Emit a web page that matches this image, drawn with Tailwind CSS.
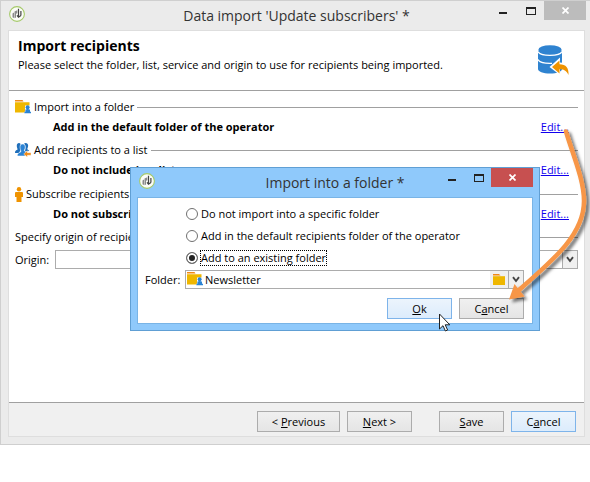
<!DOCTYPE html>
<html lang="en">
<head>
<meta charset="utf-8">
<meta name="viewport" content="width=device-width, initial-scale=1">
<title>Data import 'Update subscribers'</title>
<script src="https://cdn.jsdelivr.net/npm/@tailwindcss/browser@4"></script>
</head>
<body class="relative bg-white font-['Open_Sans',sans-serif] text-[11px] leading-4 text-black">
<svg class="hidden" aria-hidden="true">
  <symbol id="app" viewBox="0 0 16 16">
    <circle cx="8" cy="8" r="7.4" fill="#fbfcf8" stroke="#a5c96a" stroke-width="1.1"/>
    <path d="M3.500 7.500 5 6.500v5.500l-1.500-.8ZM5.500 5.500 8.300 4.200v3l-1.300.6v3.800l-1.500.6Z" fill="#8a8a8a"/>
    <path d="M9.500 2.800v8.400M11.900 5v4.500M8 9.300l1.500 1.900 2.400-1.700" fill="none" stroke="#444" stroke-width="1.200"/>
  </symbol>
  <symbol id="folder-user" viewBox="0 0 16 14">
    <path d="M0 0h7.500l1 1.400H0Z" fill="#f08a16"/>
    <path d="M0 2.300h14.500v3.200H10v5.700l-.8 1.300H0Z" fill="#efb700"/>
    <circle cx="12.600" cy="7.300" r="2" fill="#2b83d4"/>
    <path d="M11.500 8.500h2.200v1h1.300v2.200h1v1.600H9.400v-1.600h1V9.500h1.100Z" fill="#2b83d4"/>
  </symbol>
  <symbol id="group" viewBox="0 0 16 14">
    <path d="M1.800 3.200C1.600.7 3-.2 4.700.2l1 .8C4.500 2.500 5 5 5.800 6.500L4 10H0c0-1.800.5-2.600 2.300-3.200C3 6.200 1.900 5 1.800 3.200ZM9 .6c2-1.300 4.500-.3 4.100 2.500-.1 1.500-.9 2.400-.7 3.100.6.6 1.400.8 1.800 1.800L10 8.500C10 7 11.600 3 9 .6Z" fill="#1f6fbb"/>
    <path d="M5 4c0-2 1-3 2.700-3s2.600 1.200 2.500 3.200C10.100 6 9.300 6.700 9.300 7.800L11 9l-1 4H2.300c0-2.600 1-3 3.400-4 .6-1-.7-2.600-.7-5Z" fill="#2b83d4" stroke="#fff" stroke-width=".5"/>
    <path d="M8.700 11 12.300 7.700v2H16v2.500h-3.700v2Z" fill="#f08a16" stroke="#fff" stroke-width=".4"/>
  </symbol>
  <symbol id="person" viewBox="0 0 8 15">
    <circle cx="4" cy="2.200" r="2.200" fill="#ef9300"/>
    <path d="M1 5h6q1 0 1 1v4H6.500v5h-5v-5H0V6q0-1 1-1Z" fill="#ef9300"/>
  </symbol>
  <symbol id="chevron" viewBox="0 0 8 7">
    <path d="M1 1.200 4 5l3-3.800" fill="none" stroke="#444" stroke-width="1.900"/>
  </symbol>
</svg>

<main class="flex min-h-[445px] flex-col border-b border-l border-t border-[#cfcfcf] bg-[#ebebeb] pb-[7px] pl-[7px] pr-[5px]">
  <header class="relative flex h-[29px] shrink-0 items-center justify-center">
    <svg class="absolute left-px top-[5px] size-4"><use href="#app"/></svg>
    <h1 class="text-[14px] leading-5 text-[#333]">Data import 'Update subscribers' *</h1>
    <div class="absolute -right-px top-0 flex h-[19px]">
      <button aria-label="Minimize" class="flex w-7 items-center justify-center"><span class="mt-1 h-[2px] w-2 bg-[#222]"></span></button>
      <button aria-label="Maximize" class="flex w-[27px] items-center justify-center"><span class="h-2 w-[10px] border border-t-2 border-[#222]"></span></button>
      <button aria-label="Close" class="flex w-[42px] items-center justify-center bg-[#bcbcbc]"><svg class="size-[7px]" viewBox="0 0 7 7"><path d="m.5.5 6 6m0-6-6 6" stroke="#fff" stroke-width="1.700"/></svg></button>
    </div>
  </header>

  <div class="flex grow flex-col border border-[#dedede] bg-white">
    <section class="flex h-[60px] items-start justify-between border-b border-[#a0a0a0] pl-[9px] pr-[14px] pt-[5px]">
      <div>
        <h2 class="text-[14px] font-bold leading-5">Import recipients</h2>
        <p class="leading-[18px]">Please select the folder, list, service and origin to use for recipients being imported.</p>
      </div>
      <svg class="mt-[9px] h-[31px] w-8" viewBox="0 0 32 31">
        <path d="M0 6v18c0 2.500 5 4.500 12 4.500S24 26.500 24 24V6Z" fill="#2f83d0"/>
        <ellipse cx="12" cy="5" rx="11.700" ry="4.800" fill="#2f83d0"/>
        <path d="M0 6.500c1 2.500 5.500 3.900 12 3.900S23 9 24 6.500M0 14.500c1 2.500 5.500 3.900 12 3.900h2" fill="none" stroke="#fff" stroke-width="1.300"/>
        <path d="m11.500 22 10.500-9.500v5c6 0 10 4 9.500 12-2.500-5-5-5.500-9.500-5.500V30Z" fill="#fff"/>
        <path d="m14 22 7.500-6.500v3.700c6.500 0 9.500 3.800 9 10.800-2-4.500-5-5.700-9-5.700v4.200Z" fill="#ef9300"/>
      </svg>
    </section>

    <form class="grow pl-[6px] pr-[6px] pt-[6px]">
      <section class="mb-[3px]">
        <h3 class="flex h-5 items-center gap-[3px]"><svg class="h-[14px] w-4"><use href="#folder-user"/></svg>Import into a folder<span class="h-px grow bg-[#a0a0a0]"></span></h3>
        <div class="flex h-5 items-center justify-between pl-[38px] pr-[9px]"><strong>Add in the default folder of the operator</strong><a href="#" class="text-[#1100ee] underline">Edit...</a></div>
      </section>
      <section class="mb-1">
        <h3 class="flex h-5 items-center gap-[3px]"><svg class="h-[14px] w-4"><use href="#group"/></svg>Add recipients to a list<span class="h-px grow bg-[#a0a0a0]"></span></h3>
        <div class="flex h-5 items-center justify-between pl-[38px] pr-[9px]"><strong>Do not include in a list</strong><a href="#" class="text-[#1100ee] underline">Edit...</a></div>
      </section>
      <section class="mb-[3px]">
        <h3 class="flex h-5 items-center gap-[3px]"><svg class="h-[15px] w-2"><use href="#person"/></svg>Subscribe recipients to a service<span class="h-px grow bg-[#a0a0a0]"></span></h3>
        <div class="flex h-5 items-center justify-between pl-[38px] pr-[9px]"><strong>Do not subscribe</strong><a href="#" class="text-[#1100ee] underline">Edit...</a></div>
      </section>
      <section>
        <h3 class="flex h-5 items-center gap-[3px]">Specify origin of recipients<span class="h-px grow bg-[#a0a0a0]"></span></h3>
        <div class="mt-[3px] flex items-center">
          <label for="origin" class="w-10">Origin:</label>
          <div class="relative flex grow">
            <select id="origin" class="h-[19px] w-full appearance-none border border-[#acacac] bg-white"><option></option></select>
            <span class="pointer-events-none absolute right-0 top-0 flex h-[19px] w-4 items-center justify-center border border-[#acacac] bg-[#f0f0f0]"><svg class="h-[7px] w-2"><use href="#chevron"/></svg></span>
          </div>
        </div>
      </section>
    </form>

    <footer class="flex h-[34px] items-center justify-end gap-[7px] border-t border-[#a0a0a0] bg-[#f0f0f0] pr-2 pt-1">
      <button class="h-[21px] w-[83px] border border-[#acacac] bg-linear-to-b from-[#f0f0f0] to-[#e5e5e5]">&lt; <u>P</u>revious</button>
      <button class="h-[21px] w-[65px] border border-[#acacac] bg-linear-to-b from-[#f0f0f0] to-[#e5e5e5]"><u>N</u>ext &gt;</button>
      <button class="ml-5 h-[21px] w-[65px] border border-[#acacac] bg-linear-to-b from-[#f0f0f0] to-[#e5e5e5]"><u>S</u>ave</button>
      <button class="h-[21px] w-[65px] border border-[#7eb4ea] bg-linear-to-b from-[#ecf4fc] to-[#dcecfc]">C<u>a</u>ncel</button>
    </footer>
  </div>
</main>

<div role="dialog" aria-labelledby="dialog-title" class="absolute left-[130px] top-[167px] w-[410px] border border-[#609fd4] bg-[#8fc9fb] px-[6px] pb-[6px]">
  <header class="relative flex h-[29px] items-center justify-center">
    <svg class="absolute left-[2px] top-[5px] size-4"><use href="#app"/></svg>
    <h2 id="dialog-title" class="text-[14px] leading-5 text-[#333]">Import into a folder *</h2>
    <div class="absolute right-0 top-0 flex h-[19px]">
      <button aria-label="Minimize" class="flex w-7 items-center justify-center"><span class="mt-1 h-[2px] w-2 bg-[#222]"></span></button>
      <button aria-label="Maximize" class="flex w-[25px] items-center justify-center"><span class="h-2 w-[10px] border border-t-2 border-[#222]"></span></button>
      <button aria-label="Close" class="flex w-[42px] items-center justify-center bg-[#c75050]"><svg class="size-[7px]" viewBox="0 0 7 7"><path d="m.5.5 6 6m0-6-6 6" stroke="#fff" stroke-width="1.700"/></svg></button>
    </div>
  </header>
  <form class="border border-[#79b4e6] bg-white pb-1 pl-[7px] pr-2 pt-[5px]">
    <div class="flex flex-col items-start pl-[41px]">
      <label class="flex h-[22px] items-center gap-[2px]"><input type="radio" name="target" class="size-3 appearance-none rounded-full border border-[#707070] bg-white"><span class="px-px">Do not import into a specific folder</span></label>
      <label class="flex h-[22px] items-center gap-[2px]"><input type="radio" name="target" class="size-3 appearance-none rounded-full border border-[#707070] bg-white"><span class="px-px">Add in the default recipients folder of the operator</span></label>
      <label class="flex h-[22px] items-center gap-[2px]"><input type="radio" name="target" checked class="size-3 appearance-none rounded-full border border-[#707070] bg-white checked:bg-[#222] checked:shadow-[inset_0_0_0_2px_white]"><span class="border border-dotted border-black leading-[14px]">Add to an existing folder</span></label>
    </div>
    <div class="mt-px flex items-center">
      <label for="folder" class="w-10">Folder:</label>
      <div class="flex h-[19px] grow border border-[#acacac]">
        <svg class="ml-px mt-px h-[14px] w-4 shrink-0"><use href="#folder-user"/></svg>
        <input id="folder" type="text" value="Newsletter" class="w-0 grow pl-[2px] outline-none">
        <button type="button" aria-label="Browse folders" class="flex w-[18px] items-center justify-center bg-[#f0f0f0]"><svg class="h-[11px] w-3" viewBox="0 0 12 11"><path d="M0 0h6l1.500 1.500H0Z" fill="#f08a16"/><path d="M0 2.200h12V11H0Z" fill="#efb700"/></svg></button>
        <button type="button" aria-label="Open list" class="-my-px -mr-px flex w-4 items-center justify-center border border-[#acacac] bg-[#f0f0f0]"><svg class="h-[7px] w-2"><use href="#chevron"/></svg></button>
      </div>
    </div>
    <div class="mt-[9px] flex justify-end gap-[7px]">
      <button type="button" class="h-[21px] w-[65px] border border-[#7eb4ea] bg-linear-to-b from-[#ecf4fc] to-[#dcecfc]"><u>O</u>k</button>
      <button type="button" class="h-[21px] w-[65px] border border-[#acacac] bg-linear-to-b from-[#f0f0f0] to-[#e5e5e5]">C<u>a</u>ncel</button>
    </div>
  </form>
</div>

<svg class="pointer-events-none absolute left-[430px] top-[120px] h-[220px] w-[160px]" viewBox="430 120 160 220" aria-hidden="true">
  <defs><filter id="shade" x="-20%" y="-20%" width="150%" height="140%"><feDropShadow dx="3" dy="3" stdDeviation="1.500" flood-color="#000" flood-opacity=".5"/></filter></defs>
  <g filter="url(#shade)">
    <path d="M566 131.500C573 155 584 180 584 201C584 233 557 257 519 290" fill="none" stroke="#f79646" stroke-width="4.500" stroke-linecap="round"/>
    <path d="m509 299.500 5.500-15.500 10 12.500Z" fill="#f79646"/>
  </g>
  <path d="M439.500 314v15l3.500-3.300 2.400 5.300 2.200-1-2.400-5.200h4.600Z" fill="#fff" stroke="#222" stroke-width="1"/>
</svg>
</body>
</html>
